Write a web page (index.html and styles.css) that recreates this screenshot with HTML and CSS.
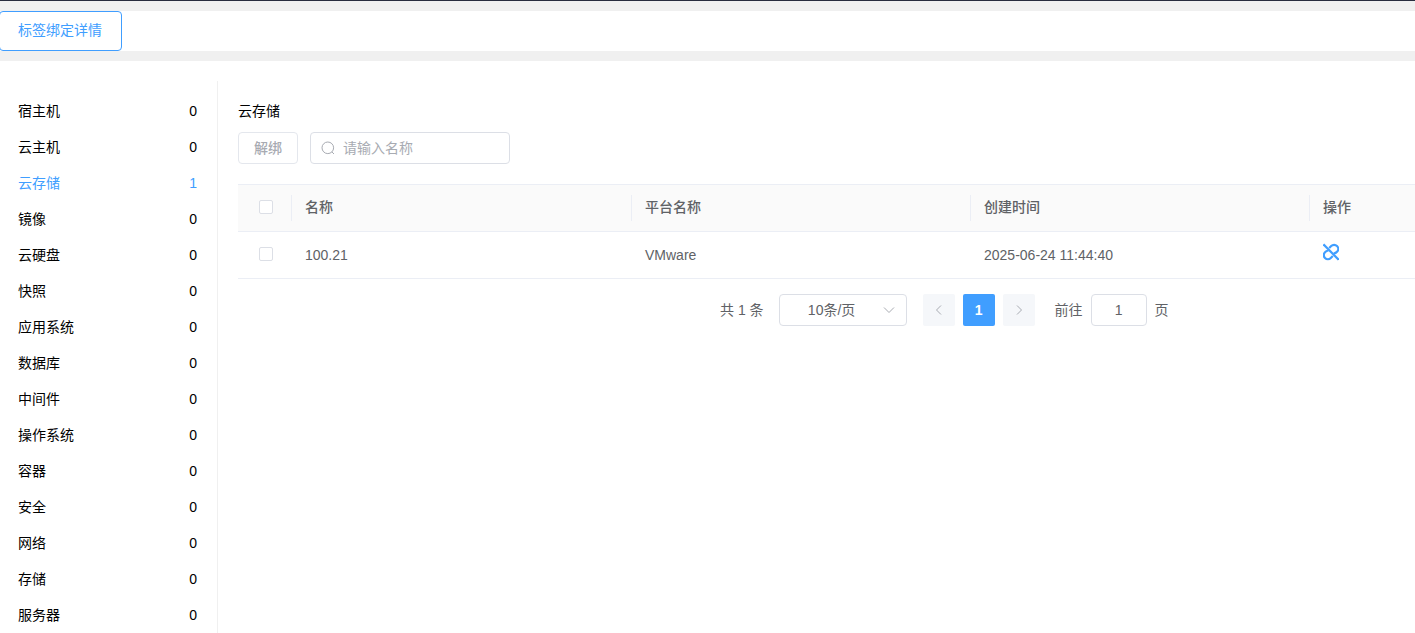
FILE: index.html
```html
<!DOCTYPE html>
<html lang="zh-CN">
<head>
    <meta charset="UTF-8">
    <meta name="viewport" content="width=device-width, initial-scale=1.0">
    <title>标签绑定详情</title>
    <link rel="stylesheet" href="styles.css">
</head>
<body>
    <!-- Tabs -->
    <div class="tabs-bar">
        <div class="tab">标签绑定详情</div>
    </div>

    <div class="page">
        <!-- Resource types -->
        <ul class="side-list">
            <li><span>宿主机</span><span>0</span></li>
            <li><span>云主机</span><span>0</span></li>
            <li class="active"><span>云存储</span><span>1</span></li>
            <li><span>镜像</span><span>0</span></li>
            <li><span>云硬盘</span><span>0</span></li>
            <li><span>快照</span><span>0</span></li>
            <li><span>应用系统</span><span>0</span></li>
            <li><span>数据库</span><span>0</span></li>
            <li><span>中间件</span><span>0</span></li>
            <li><span>操作系统</span><span>0</span></li>
            <li><span>容器</span><span>0</span></li>
            <li><span>安全</span><span>0</span></li>
            <li><span>网络</span><span>0</span></li>
            <li><span>存储</span><span>0</span></li>
            <li><span>服务器</span><span>0</span></li>
        </ul>

        <div class="content">
            <div class="title">云存储</div>

            <div class="toolbar">
                <button class="btn" disabled>解绑</button>
                <label class="search">
                    <svg width="14" height="14" viewBox="0 0 14 14" fill="none" stroke="#a8abb2">
                        <circle cx="6.8" cy="6.8" r="5.8"/>
                        <path d="M10.9 10.9L13 13"/>
                    </svg>
                    <input type="text" placeholder="请输入名称">
                </label>
            </div>

            <table>
                <thead>
                    <tr>
                        <th class="col-check"><div class="cell"><input type="checkbox"></div></th>
                        <th class="col-name"><div class="cell">名称</div></th>
                        <th class="col-data"><div class="cell">平台名称</div></th>
                        <th class="col-data"><div class="cell">创建时间</div></th>
                        <th><div class="cell">操作</div></th>
                    </tr>
                </thead>
                <tbody>
                    <tr>
                        <td class="col-check"><div class="cell"><input type="checkbox"></div></td>
                        <td><div class="cell">100.21</div></td>
                        <td><div class="cell">VMware</div></td>
                        <td><div class="cell">2025-06-24 11:44:40</div></td>
                        <td>
                            <div class="cell">
                                <svg class="unbind" width="16" height="18" viewBox="1 0 16 18" fill="none" stroke="#409eff" stroke-width="2.2">
                                    <path d="M1.4 1.4L16.6 16.6"/>
                                    <path d="M7.2 5L9.2 3A3.8 3.8 0 0 1 15 8.8C14.2 9.8 13.2 10.3 11.6 10.5"/>
                                    <path d="M10.8 13L8.8 15A3.8 3.8 0 0 1 3 9.2C3.8 8.2 4.8 7.7 6.4 7.5"/>
                                </svg>
                            </div>
                        </td>
                    </tr>
                </tbody>
            </table>

            <div class="pagination">
                <span class="total">共 1 条</span>
                <div class="page-size">
                    <span>10条/页</span>
                    <svg width="12" height="12" viewBox="0 0 12 12" fill="none" stroke="#a8abb2">
                        <path d="M1 3.5L6 8.5L11 3.5"/>
                    </svg>
                </div>
                <button class="pager" disabled>
                    <svg width="12" height="12" viewBox="0 0 12 12" fill="none" stroke="#a8abb2">
                        <path d="M8 1.5L3.5 6L8 10.5"/>
                    </svg>
                </button>
                <button class="pager current">1</button>
                <button class="pager" disabled>
                    <svg width="12" height="12" viewBox="0 0 12 12" fill="none" stroke="#a8abb2">
                        <path d="M4 1.5L8.5 6L4 10.5"/>
                    </svg>
                </button>
                <span class="goto">前往</span>
                <input class="goto-input" type="text" value="1">
                <span>页</span>
            </div>
        </div>
    </div>
</body>
</html>
```
FILE: styles.css
```css
* {
    box-sizing: border-box;
}
body {
    margin: 0;
    height: 633px;
    overflow: hidden;
    background-color: #f0f0f0;
    border-top: 1px solid #282c3e;
    font-family: "Liberation Sans", "Noto Sans CJK SC", sans-serif;
    font-size: 14px;
    color: #000;
}
input, button {
    font-family: inherit;
    font-size: 14px;
}
.tabs-bar {
    display: flex;
    height: 40px;
    margin: 10px 0;
    background-color: #fff;
}
.tab {
    width: 123px;
    margin-left: -1px;
    padding-left: 18px;
    border: 1px solid #409eff;
    border-radius: 4px;
    line-height: 36px;
    color: #409eff;
}
.page {
    display: flex;
    height: 572px;
    padding-top: 20px;
    background-color: #fff;
}
.side-list {
    flex: none;
    width: 218px;
    margin: 0;
    padding: 12px 20px 0 18px;
    border-right: 1px solid #f0f0f0;
    list-style: none;
}
.side-list li {
    display: flex;
    justify-content: space-between;
    height: 36px;
    line-height: 36px;
}
.side-list .active {
    color: #409eff;
}
.content {
    flex: 1;
    min-width: 0;
    padding: 20px 0 0 20px;
    overflow: hidden;
}
.title {
    height: 31px;
    line-height: 20px;
}
.toolbar {
    display: flex;
    gap: 12px;
    margin-bottom: 20px;
}
.btn {
    width: 60px;
    height: 32px;
    padding: 0 0 2px;
    background-color: #fff;
    border: 1px solid #e4e7ed;
    border-radius: 4px;
    color: #a8abb2;
    font-weight: 500;
}
.search {
    display: flex;
    align-items: center;
    gap: 8px;
    width: 200px;
    height: 32px;
    padding: 0 10px;
    border: 1px solid #dcdfe6;
    border-radius: 4px;
}
.search input {
    width: 150px;
    padding: 0;
    border: none;
    outline: none;
}
.search input::placeholder {
    color: #a8abb2;
}
table {
    width: 1177px;
    table-layout: fixed;
    border-collapse: separate;
    border-spacing: 0;
    border-top: 1px solid #ebeef5;
    color: #606266;
}
th, td {
    height: 47px;
    padding: 0;
    border-bottom: 1px solid #ebeef5;
    text-align: left;
}
th {
    background-color: #fafafa;
    font-weight: 500;
}
.cell {
    padding-left: 13px;
    line-height: 22px;
}
th .cell {
    height: 26px;
    line-height: 24px;
    border-right: 1px solid #ebeef5;
}
th:last-child .cell {
    border-right: none;
}
.col-check {
    width: 54px;
}
.col-check .cell {
    display: flex;
    align-items: center;
    padding: 0 0 2px 21px;
}
.col-name {
    width: 340px;
}
.col-data {
    width: 339px;
}
input[type="checkbox"] {
    appearance: none;
    width: 14px;
    height: 14px;
    margin: 0;
    background-color: #fff;
    border: 1px solid #dcdfe6;
    border-radius: 2px;
}
.unbind {
    display: block;
    margin-bottom: 6px;
}
.pagination {
    display: flex;
    align-items: center;
    margin: 15px 0 0 482px;
    color: #606266;
}
.pagination > span, .page-size span {
    padding-bottom: 2px;
}
.page-size {
    display: flex;
    align-items: center;
    width: 128px;
    height: 32px;
    margin: 0 16px 0 15px;
    padding: 0 11px 0 1px;
    border: 1px solid #dcdfe6;
    border-radius: 4px;
}
.page-size span {
    flex: 1;
    text-align: center;
}
.pager {
    display: flex;
    align-items: center;
    justify-content: center;
    width: 32px;
    height: 32px;
    margin-right: 8px;
    padding: 0;
    background-color: #f5f7fa;
    border: none;
    border-radius: 2px;
}
.pager.current {
    background-color: #409eff;
    color: #fff;
    font-weight: bold;
}
.goto {
    margin-left: 12px;
}
.goto-input {
    width: 56px;
    height: 32px;
    margin: 0 8px;
    padding: 0;
    border: 1px solid #dcdfe6;
    border-radius: 4px;
    color: #606266;
    text-align: center;
}
```
